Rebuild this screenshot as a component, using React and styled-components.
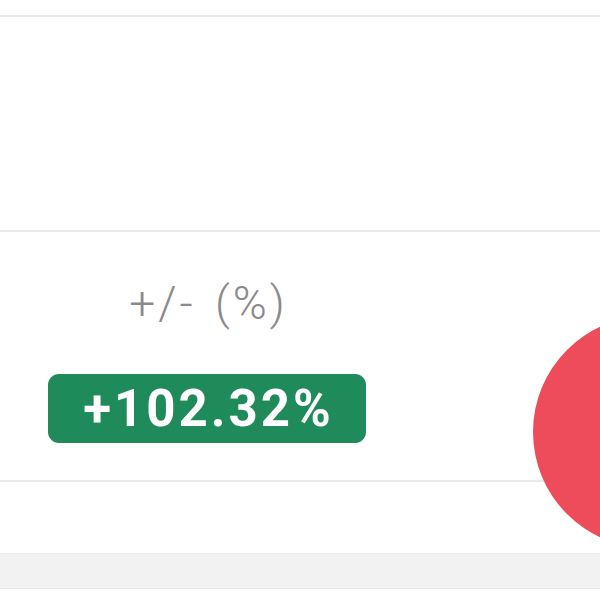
import React from 'react'
import styled, { createGlobalStyle } from 'styled-components'

const GlobalStyle = createGlobalStyle`
  html, body {
    margin: 0;
    padding: 0;
    background: #ffffff;
    overflow: hidden;
  }
  body {
    font-family: Roboto, "Liberation Sans", Arial, sans-serif;
  }
`

const Page = styled.div`
  position: relative;
  width: 600px;
  height: 600px;
  overflow: hidden;
  background: #fff;
  display: flex;
  flex-direction: column;
`

const Row = styled.div`
  height: ${({ h }) => h}px;
  flex-shrink: 0;
  border-bottom: 2px solid #e9e9e9;
  box-sizing: border-box;
`

const StatRow = styled(Row)`
  display: flex;
  align-items: flex-start;
`

const StatCol = styled.div`
  width: 414px;
  display: flex;
  flex-direction: column;
  align-items: center;
  padding-top: 48px;
`

const Label = styled.div`
  font-family: Roboto, "Liberation Sans", sans-serif;
  font-weight: 300;
  font-size: 46px;
  letter-spacing: 3px;
  word-spacing: 5px;
  color: #8a8a8a;
  line-height: 1;
  padding-left: 3px;
`

const Badge = styled.div`
  margin-top: 48px;
  width: 318px;
  height: 69px;
  box-sizing: border-box;
  border-radius: 11px;
  background: #1f8a5a;
  color: #fff;
  font-family: Roboto, "Liberation Sans", sans-serif;
  font-weight: 700;
  font-size: 51px;
  letter-spacing: 3px;
  padding-left: 3px;
  display: flex;
  align-items: center;
  justify-content: center;
`

const Spacer = styled.div`
  height: 71px;
  flex-shrink: 0;
`

const Band = styled.div`
  height: 36px;
  flex-shrink: 0;
  background: #f2f2f2;
  border-top: 1px solid #ececec;
  border-bottom: 1px solid #e6e6e6;
  box-sizing: border-box;
`

const Fab = styled.div`
  position: absolute;
  left: 533px;
  top: 316px;
  width: 232px;
  height: 232px;
  border-radius: 50%;
  background: #ee4b5b;
`

export default function App() {
  return (
    <>
      <GlobalStyle />
      <Page>
        <Row h={17} />
        <Row h={215} />
        <StatRow h={250}>
          <StatCol>
            <Label>+/- (%)</Label>
            <Badge>+102.32%</Badge>
          </StatCol>
        </StatRow>
        <Spacer />
        <Band />
        <Fab />
      </Page>
    </>
  )
}
